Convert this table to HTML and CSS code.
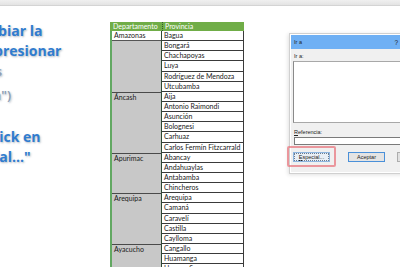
FILE: index.html
```html
<!DOCTYPE html>
<html lang="es">
<head>
<meta charset="utf-8">
<title>Ir a Especial</title>
<link rel="stylesheet" href="styles.css">
</head>
<body>
<div class="topbar"></div>
<div class="main">
  <div class="notes">
    <div class="notes-inner">
      <p class="ln">Para cambiar la</p>
      <p class="ln">la celda, presionar</p>
      <p class="ln gray">F5, o teclas</p>
      <p class="ln gray l4">("Selección")</p>
      <p class="ln l5">y hacer click en</p>
      <p class="ln">el "Especial..."</p>
    </div>
  </div>

  <div class="sheet">
    <div class="hdr">
      <div class="hcell a">Departamento</div>
      <div class="hcell b">Provincia</div>
    </div>
    <div class="grid">
      <div class="dept first span6"><div class="active">Amazonas</div></div>
      <div class="prov">Bagua</div>
      <div class="prov">Bongará</div>
      <div class="prov">Chachapoyas</div>
      <div class="prov">Luya</div>
      <div class="prov">Rodríguez de Mendoza</div>
      <div class="prov">Utcubamba</div>

      <div class="dept span6"><div class="dname">Áncash</div></div>
      <div class="prov">Aija</div>
      <div class="prov">Antonio Raimondi</div>
      <div class="prov">Asunción</div>
      <div class="prov">Bolognesi</div>
      <div class="prov">Carhuaz</div>
      <div class="prov">Carlos Fermín Fitzcarrald</div>

      <div class="dept span4"><div class="dname">Apurimac</div></div>
      <div class="prov">Abancay</div>
      <div class="prov">Andahuaylas</div>
      <div class="prov">Antabamba</div>
      <div class="prov">Chincheros</div>

      <div class="dept span5"><div class="dname">Arequipa</div></div>
      <div class="prov">Arequipa</div>
      <div class="prov">Camaná</div>
      <div class="prov">Caravelí</div>
      <div class="prov">Castilla</div>
      <div class="prov">Caylloma</div>

      <div class="dept span4"><div class="dname">Ayacucho</div></div>
      <div class="prov">Cangallo</div>
      <div class="prov">Huamanga</div>
      <div class="prov">Huanca Sancos</div>
      <div class="prov">Huanta</div>
    </div>
  </div>

  <div class="dialog">
    <div class="dlg-title"><span class="dlg-name">Ir a</span><span class="help">?</span></div>
    <div class="dlg-body">
      <div class="lbl">Ir a:</div>
      <div class="listbox"></div>
      <div class="lbl ref"><u>R</u>eferencia:</div>
      <div class="input"></div>
      <div class="btns">
        <div class="btn special"><u>E</u>special...</div>
        <div class="btn ok">Aceptar</div>
        <div class="btn">Cancelar</div>
      </div>
    </div>
    <div class="highlight"></div>
  </div>
</div>
</body>
</html>
```

FILE: styles.css
```css
* { box-sizing: border-box; margin: 0; padding: 0; }
html, body { width: 400px; height: 267px; overflow: hidden; background: #ffffff; }
body { font-family: "Lato", "Liberation Sans", sans-serif; color: #1a1a1a; }

.topbar {
  height: 6px;
  background: linear-gradient(#f0f0f0, #e3e3e3);
  border-bottom: 1px solid #d4d4d4;
}

.main { display: flex; align-items: flex-start; }

/* left notes, clipped at the window edge */
.notes {
  width: 110px;
  flex: none;
  overflow: hidden;
  padding-top: 15px;
  font-family: "Open Sans", "DejaVu Sans", sans-serif;
  font-weight: 700;
  font-size: 14px;
  line-height: 20px;
  color: #2f7ccf;
  text-shadow: 1px 1px 2px rgba(40, 60, 90, 0.35);
  white-space: nowrap;
}
.notes-inner { margin-left: -67px; }
.ln.gray { color: #8a9cb2; font-size: 13px; font-weight: 600; }
.ln.l4 { margin-top: 4px; }
.ln.l5 { margin-top: 22px; }

/* spreadsheet */
.sheet { width: 134px; flex: none; margin-top: 16px; font-size: 7px; }
.hdr {
  display: grid;
  grid-template-columns: 52px 82px;
  height: 9px;
  background: #70ad47;
  color: #ffffff;
  line-height: 9px;
}
.hcell { padding-left: 3px; white-space: nowrap; overflow: hidden; }
.hcell.b { border-left: 1px dotted #2f5a2f; padding-left: 2px; }

.grid {
  display: grid;
  grid-template-columns: 50px 82px;
  grid-auto-rows: 10.15px;
  border-left: 2px solid #62a862;
}
.dept {
  grid-column: 1;
  background: #c8c8c8;
  border-top: 1.5px solid #4a4a4a;
  border-right: 1px solid #2f4a35;
  line-height: 9px;
  white-space: nowrap;
}
.dept.first { border-top: none; }
.span6 { grid-row: span 6; }
.span5 { grid-row: span 5; }
.span4 { grid-row: span 4; }
.dname { padding-left: 2px; }
.active {
  height: 10.15px;
  background: #ffffff;
  border-bottom: 1px solid #555555;
  padding-left: 2px;
  line-height: 9.5px;
}
.prov {
  grid-column: 2;
  background: #ffffff;
  border-bottom: 1px solid #3a3a3a;
  border-right: 1px solid #3a3a3a;
  padding-left: 2px;
  line-height: 9.5px;
  white-space: nowrap;
  overflow: hidden;
}

/* dialog */
.dialog {
  position: relative;
  flex: none;
  width: 120px;
  margin-top: 27px;
  margin-left: 45px;
  background: #ffffff;
  border: 1px solid #d0d0d0;
  padding: 1px;
  box-shadow: -1px 1px 4px rgba(0, 0, 0, 0.12);
  font-family: "Liberation Sans", sans-serif;
  font-size: 5.5px;
  color: #222222;
}
.dlg-title {
  display: flex;
  align-items: center;
  height: 14px;
  background: #6fb0f4;
  padding: 0 9px 0 3px;
}
.help { margin-left: auto; font-size: 6.5px; }
.dlg-body {
  background: #f0f0f0;
  padding: 3px 0 10px 2px;
}
.lbl { height: 8px; line-height: 8px; padding-left: 1px; }
.listbox {
  margin-top: 1px;
  width: 115px;
  height: 62px;
  background: #ffffff;
  border: 1px solid #a8a8a8;
  border-left-color: #8a8a8a;
}
.lbl.ref { margin-top: 5px; }
.input {
  margin-top: 1px;
  margin-left: 1px;
  width: 114px;
  height: 8px;
  background: #ffffff;
  border: 1px solid #7a7a7a;
}
.btns { display: flex; gap: 18px; margin-top: 7px; }
.btn {
  flex: none;
  width: 37px;
  height: 10px;
  line-height: 8px;
  text-align: center;
  background: #e1e1e1;
  border: 1px solid #adadad;
  font-size: 5.5px;
}
.btn.special {
  background: #e9eff6;
  border-color: #8fb6e0;
  outline: 1px dotted #6b7c8f;
  outline-offset: -2px;
}
.btn.ok { border: 1.5px solid #4a90d9; background: #e4e4e4; }
.btn.ok + .btn { margin-left: -6px; }

.highlight {
  position: absolute;
  left: -3px;
  top: 112px;
  width: 49px;
  height: 21px;
  border: 2px solid rgba(232, 120, 128, 0.75);
  border-radius: 2px;
}
```
